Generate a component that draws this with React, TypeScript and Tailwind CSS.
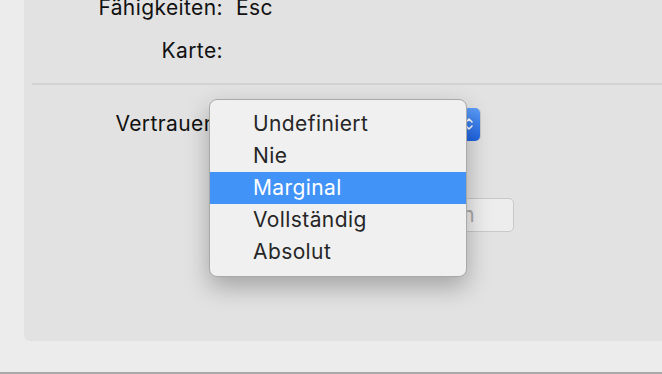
import React from "react";

const items = ["Undefiniert", "Nie", "Marginal", "Vollständig", "Absolut"];

const font = { fontFamily: "Inter, 'Noto Sans', sans-serif" };

export default function App() {
  return (
    <div
      className="relative h-[374px] w-[662px] overflow-hidden border-b-2 border-[#a8a8a8] bg-[#ececec] text-[21px] tracking-[0.4px] text-[#111]"
      style={font}
    >
      {/* inset panel */}
      <div className="ml-[24px] flex h-[341px] w-[650px] flex-col rounded-bl-[6px] bg-[#e2e2e2]">
        <div className="-mt-[5px] flex flex-col">
          <div className="flex h-[26px] items-center">
            <span className="w-[199px] text-right">Fähigkeiten:</span>
            <span className="ml-[13px]">Esc</span>
          </div>
          <div className="mt-[17px] flex h-[26px] items-center">
            <span className="w-[199px] text-right">Karte:</span>
          </div>
        </div>

        <div className="ml-[8px] mt-[19px] h-[2px] bg-[#d3d3d3]" />

        <div className="mt-[22px] flex h-[34px] items-center">
          <span className="w-[199px] text-right">Vertrauen:</span>
          <div className="ml-[13px] flex h-[33px] w-[245px] items-center justify-end rounded-[5px] border border-[#c8c8c8] bg-[#f2f2f2]">
            <div className="flex h-[33px] w-[22px] items-center justify-center rounded-r-[5px] bg-gradient-to-b from-[#5a9cf9] to-[#1d63e3]">
              <svg width="10" height="18" viewBox="0 0 10 18" fill="none" stroke="white" strokeWidth="1.6" strokeLinecap="round" strokeLinejoin="round">
                <path d="M2 7 L5 4 L8 7" />
                <path d="M2 11 L5 14 L8 11" />
              </svg>
            </div>
          </div>
        </div>

        <div className="mt-[57px] flex h-[34px] items-center">
          <span className="w-[199px]" />
          <div className="ml-[13px] flex h-[34px] w-[278px] items-center justify-end rounded-[5px] border border-[#c9c9c9] bg-[#ededed] pr-[38px] text-[#a9a9a9]">
            Suchen
          </div>
        </div>
      </div>

      {/* open popup menu */}
      <div className="absolute left-[209px] top-[99px] w-[258px] rounded-[8px] border border-[#a9a9a9] bg-[#f0f0f0] py-[8px] shadow-[0_10px_24px_rgba(0,0,0,0.28)]">
        {items.map((it) => (
          <div
            key={it}
            className={`flex h-[32px] items-center pl-[43px] ${
              it === "Marginal" ? "bg-[#4293f8] text-white" : "text-[#262626]"
            }`}
          >
            {it}
          </div>
        ))}
      </div>
    </div>
  );
}
